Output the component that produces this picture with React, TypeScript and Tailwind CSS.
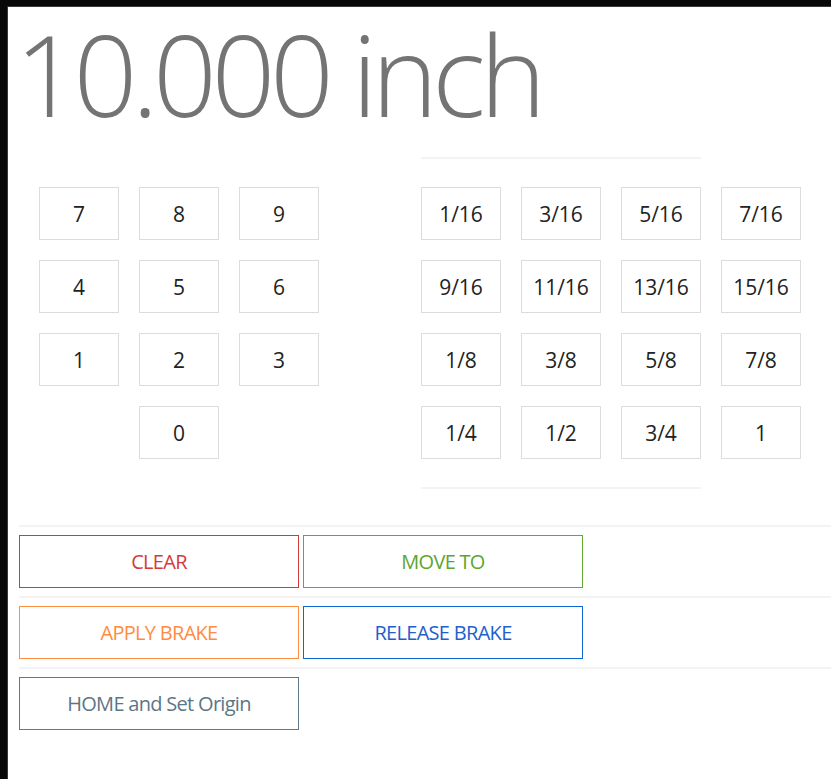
import React from 'react';

const digits = ['7', '8', '9', '4', '5', '6', '1', '2', '3'];

const fractions = [
  '1/16', '3/16', '5/16', '7/16',
  '9/16', '11/16', '13/16', '15/16',
  '1/8', '3/8', '5/8', '7/8',
  '1/4', '1/2', '3/4', '1',
];

const KeyButton: React.FC<{ label: string }> = ({ label }) => (
  <button className="w-[80px] h-[53px] pt-[2px] border border-[#dcdcdc] bg-white text-[21px] text-[#222] flex items-center justify-center">
    {label}
  </button>
);

const actions = [
  [
    { label: 'CLEAR', cls: 'border-[#d13a36] text-[#d43b38]' },
    { label: 'MOVE TO', cls: 'border-[#62a832] text-[#5ca62e]' },
  ],
  [
    { label: 'APPLY BRAKE', cls: 'border-[#ff8f40] text-[#ff8c42]' },
    { label: 'RELEASE BRAKE', cls: 'border-[#0b68d4] text-[#1e5fcc]' },
  ],
  [{ label: 'HOME and Set Origin', cls: 'border-[#60798a] text-[#5b7686]' }],
];

export default function App() {
  return (
    <div
      className="min-h-screen bg-[#080808] pt-[6px] pl-[7px]"
      style={{ fontFamily: '"Open Sans", "Noto Sans", sans-serif' }}
    >
      <div className="min-h-[773px] bg-white border-t border-l border-[#3a3a3a]">
        {/* position readout */}
        <h1 className="pl-[7px] pr-[8px] text-[112px] leading-[1.2] font-light tracking-[-5.5px] text-[#747474] whitespace-nowrap">
          10.000 inch
        </h1>

        <div className="pl-[11px]">
          {/* keypads */}
          <div className="flex items-start">
            <div className="w-[402px] pl-[20px] pt-[46px]">
              <div className="grid grid-cols-[repeat(3,80px)] gap-x-[20px] gap-y-[20px]">
                {digits.map((d) => (
                  <KeyButton key={d} label={d} />
                ))}
                <div />
                <KeyButton label="0" />
              </div>
            </div>
            <div className="pt-[16px]">
              <div className="w-[280px] h-[2px] bg-[#f3f3f3]" />
              <div className="mt-[28px] grid grid-cols-[repeat(4,80px)] gap-x-[20px] gap-y-[20px]">
                {fractions.map((f) => (
                  <KeyButton key={f} label={f} />
                ))}
              </div>
              <div className="mt-[28px] w-[280px] h-[2px] bg-[#f3f3f3]" />
            </div>
          </div>

          {/* command rows */}
          <div className="mt-[36px]">
            {actions.map((row, i) => (
              <div key={i}>
                <div className="h-[2px] bg-[#f3f3f3]" />
                <div className="flex gap-[4px] py-[8px]">
                  {row.map((a) => (
                    <button
                      key={a.label}
                      className={`w-[280px] h-[53px] border bg-white text-[20px] tracking-[-0.7px] flex items-center justify-center ${a.cls}`}
                    >
                      {a.label}
                    </button>
                  ))}
                </div>
              </div>
            ))}
          </div>
        </div>
      </div>
    </div>
  );
}
